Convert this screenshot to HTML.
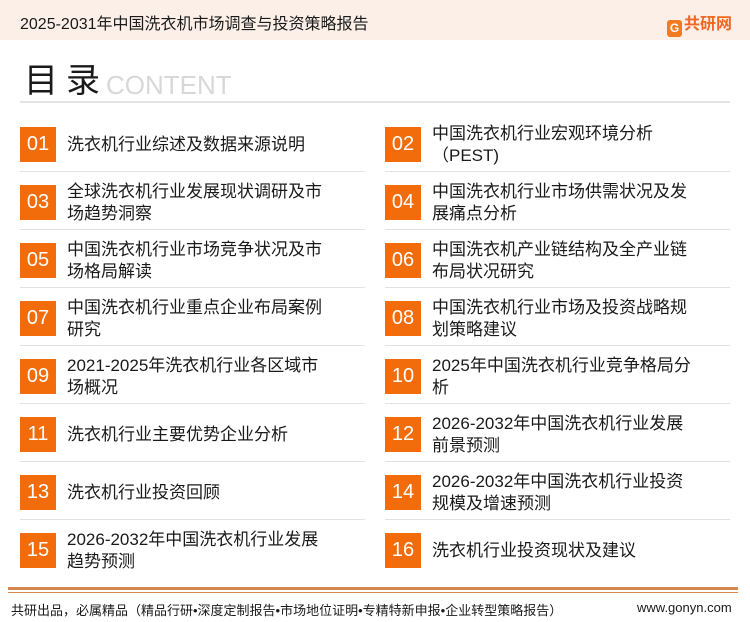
<!DOCTYPE html>
<html><head><meta charset="utf-8"><style>
*{margin:0;padding:0;box-sizing:border-box}
body{width:750px;height:622px;background:#fff;position:relative;overflow:hidden;font-family:"Liberation Sans","Noto Sans CJK SC",sans-serif;color:#1a1a1a}
.hdr{position:absolute;left:0;top:0;width:750px;height:40px;background:#fbefe8}
.hdr .t{position:absolute;left:20px;top:10px;font-size:16px}
.logo{position:absolute;left:667px;top:10px;font-size:16px;font-weight:bold;color:#f26522}
.logo b{display:inline-block;width:15px;height:17px;background:#f47a20;border-radius:3px;vertical-align:-3px;margin-right:2px;color:#fff;font-size:12px;text-align:center;line-height:17px}
.ttl{position:absolute;left:24px;top:62px;font-size:34px;line-height:38px;letter-spacing:8px}
.en{position:absolute;left:106px;top:70px;font-size:26px;line-height:30px;color:#d8d8d8}
.hl{position:absolute;left:20px;top:101px;width:710px;height:2px;background:#e4e4e4}
.it{position:absolute;height:35px;width:345px}
.box{position:absolute;left:0;top:0;width:36px;height:35px;background:#f36c0c;color:#fff;font-size:20px;text-align:center;line-height:35px}
.tx{position:absolute;left:47px;top:-12px;height:59px;width:264px;font-size:17px;line-height:22px;display:flex;align-items:center}
.sep{position:absolute;height:1px;background:#e2e2e2}
.f1{position:absolute;left:8px;top:587px;width:730px;height:3px;background:#d8884e}
.f2{position:absolute;left:8px;top:592px;width:730px;height:1px;background:#d8884e}
.ft{position:absolute;left:11px;top:600px;font-size:13px}
.fu{position:absolute;left:637px;top:600px;font-size:13px}
</style></head><body>
<div class="hdr"><div class="t">2025-2031年中国洗衣机市场调查与投资策略报告</div><div class="logo"><b>G</b>共研网</div></div>
<div class="ttl">目录</div><div class="en">CONTENT</div>
<div class="hl"></div>

<div class="it" style="left:20px;top:127px"><div class="box">01</div><div class="tx">洗衣机行业综述及数据来源说明</div></div>
<div class="it" style="left:385px;top:127px"><div class="box">02</div><div class="tx">中国洗衣机行业宏观环境分析（PEST)</div></div>
<div class="it" style="left:20px;top:185px"><div class="box">03</div><div class="tx">全球洗衣机行业发展现状调研及市场趋势洞察</div></div>
<div class="it" style="left:385px;top:185px"><div class="box">04</div><div class="tx">中国洗衣机行业市场供需状况及发展痛点分析</div></div>
<div class="it" style="left:20px;top:243px"><div class="box">05</div><div class="tx">中国洗衣机行业市场竞争状况及市场格局解读</div></div>
<div class="it" style="left:385px;top:243px"><div class="box">06</div><div class="tx">中国洗衣机产业链结构及全产业链布局状况研究</div></div>
<div class="it" style="left:20px;top:301px"><div class="box">07</div><div class="tx">中国洗衣机行业重点企业布局案例研究</div></div>
<div class="it" style="left:385px;top:301px"><div class="box">08</div><div class="tx">中国洗衣机行业市场及投资战略规划策略建议</div></div>
<div class="it" style="left:20px;top:359px"><div class="box">09</div><div class="tx">2021-2025年洗衣机行业各区域市场概况</div></div>
<div class="it" style="left:385px;top:359px"><div class="box">10</div><div class="tx">2025年中国洗衣机行业竞争格局分析</div></div>
<div class="it" style="left:20px;top:417px"><div class="box">11</div><div class="tx">洗衣机行业主要优势企业分析</div></div>
<div class="it" style="left:385px;top:417px"><div class="box">12</div><div class="tx">2026-2032年中国洗衣机行业发展前景预测</div></div>
<div class="it" style="left:20px;top:475px"><div class="box">13</div><div class="tx">洗衣机行业投资回顾</div></div>
<div class="it" style="left:385px;top:475px"><div class="box">14</div><div class="tx">2026-2032年中国洗衣机行业投资规模及增速预测</div></div>
<div class="it" style="left:20px;top:533px"><div class="box">15</div><div class="tx">2026-2032年中国洗衣机行业发展趋势预测</div></div>
<div class="it" style="left:385px;top:533px"><div class="box">16</div><div class="tx">洗衣机行业投资现状及建议</div></div>

<div class="sep" style="left:20px;width:345px;top:171px"></div><div class="sep" style="left:385px;width:345px;top:171px"></div>
<div class="sep" style="left:20px;width:345px;top:229px"></div><div class="sep" style="left:385px;width:345px;top:229px"></div>
<div class="sep" style="left:20px;width:345px;top:287px"></div><div class="sep" style="left:385px;width:345px;top:287px"></div>
<div class="sep" style="left:20px;width:345px;top:345px"></div><div class="sep" style="left:385px;width:345px;top:345px"></div>
<div class="sep" style="left:20px;width:345px;top:403px"></div><div class="sep" style="left:385px;width:345px;top:403px"></div>
<div class="sep" style="left:20px;width:345px;top:461px"></div><div class="sep" style="left:385px;width:345px;top:461px"></div>
<div class="sep" style="left:20px;width:345px;top:519px"></div><div class="sep" style="left:385px;width:345px;top:519px"></div>

<div class="f1"></div><div class="f2"></div>
<div class="ft">共研出品，必属精品（精品行研•深度定制报告•市场地位证明•专精特新申报•企业转型策略报告）</div>
<div class="fu">www.gonyn.com</div>
</body></html>
